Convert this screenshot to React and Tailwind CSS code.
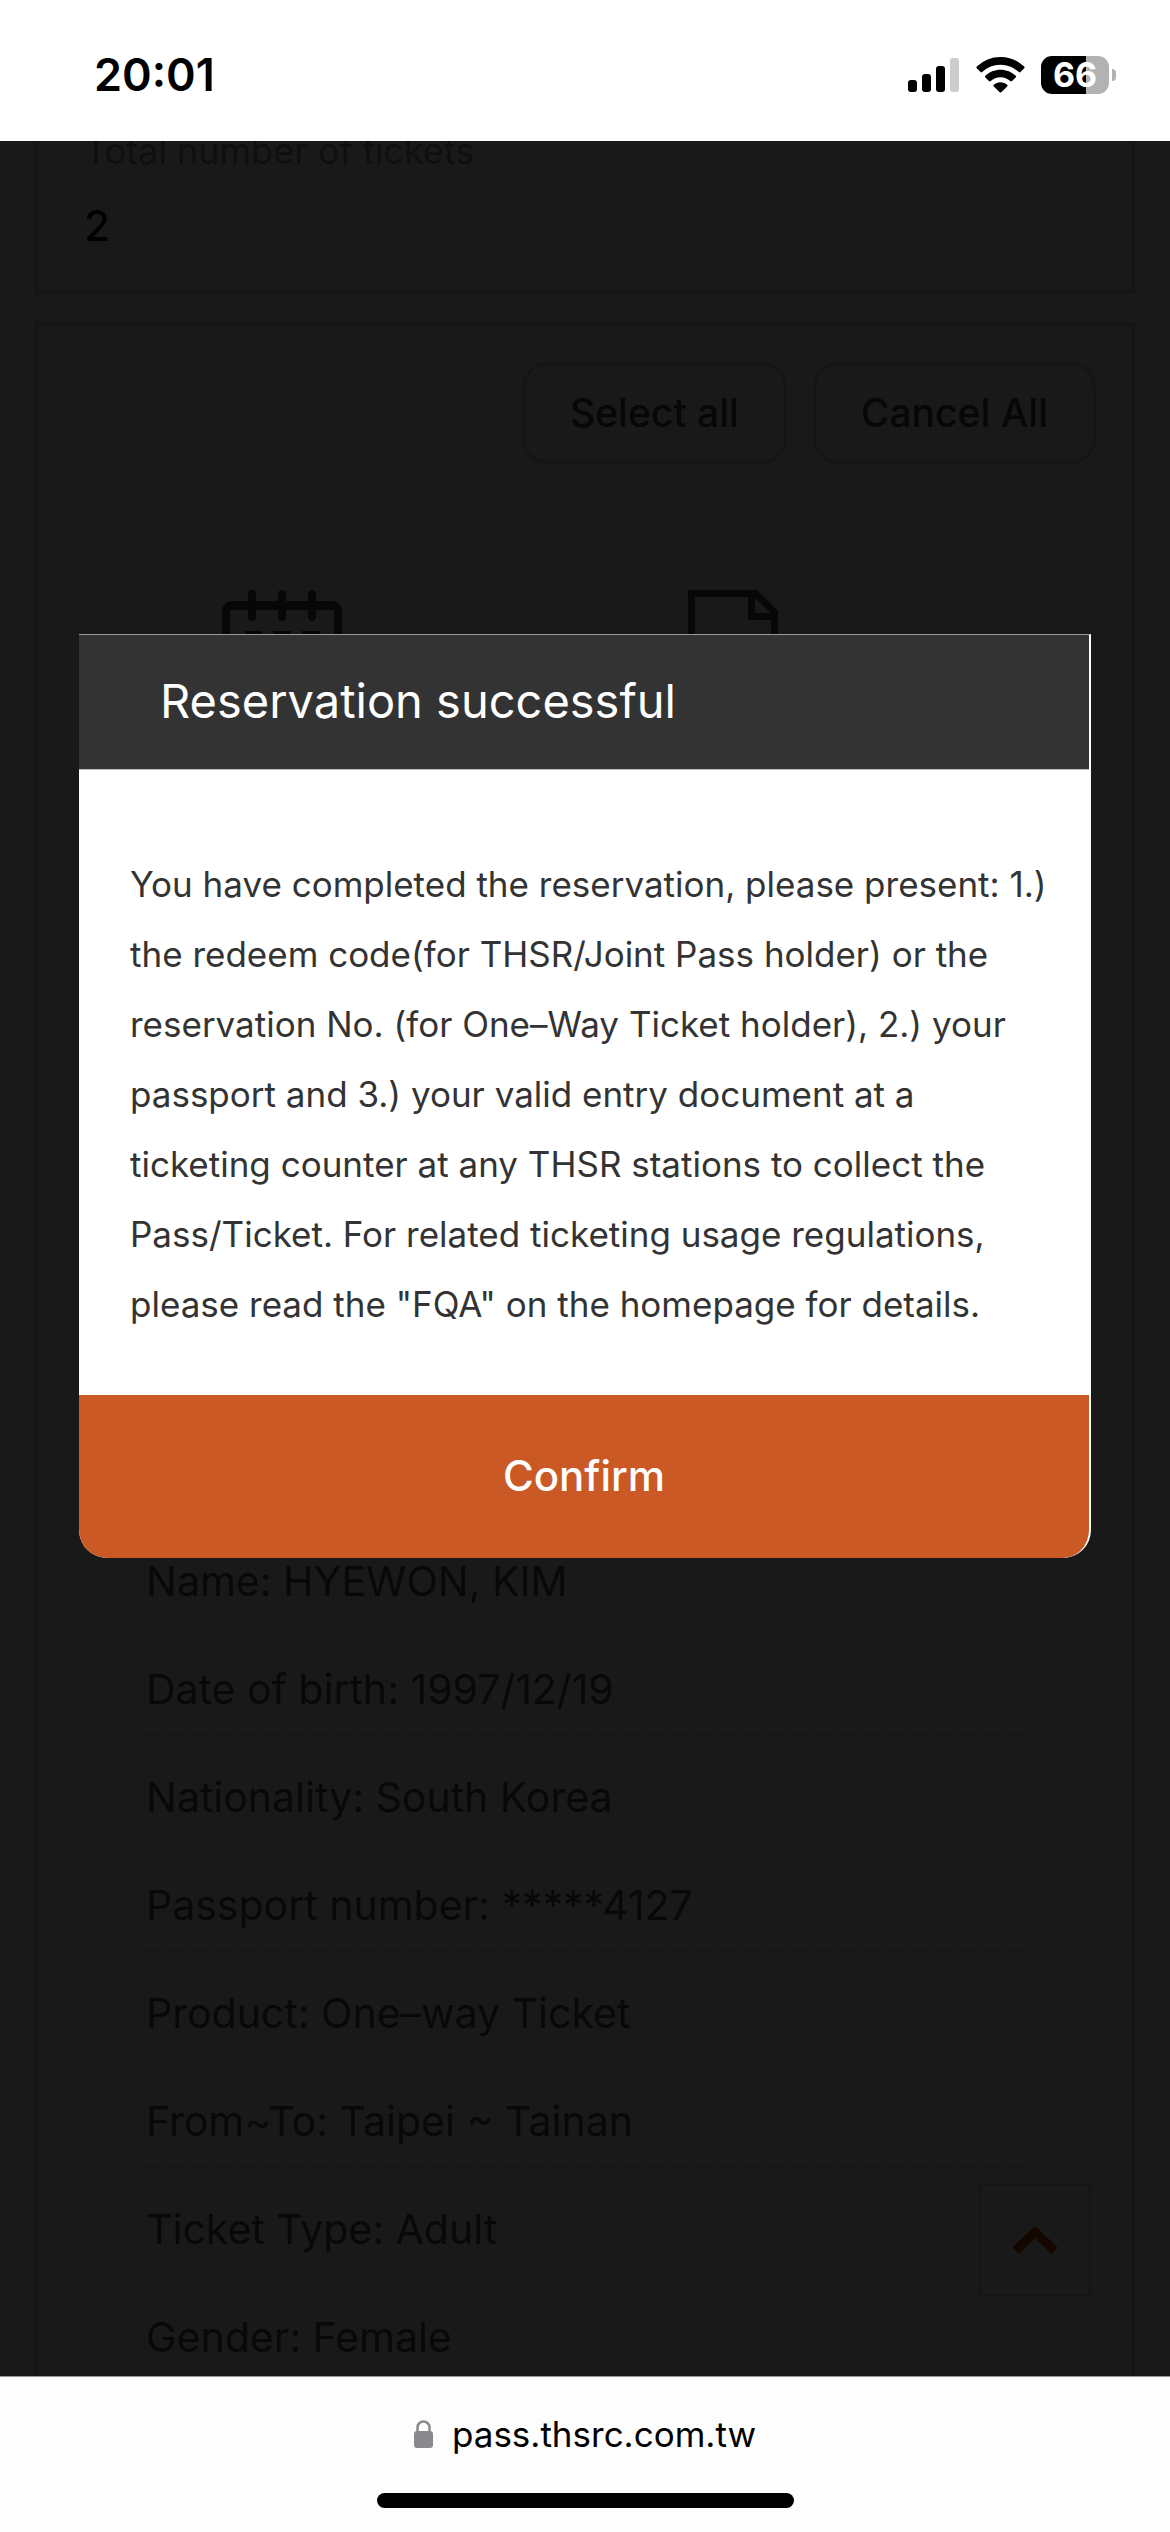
import React, { useState } from "react";

const details = [
  { label: "Name", value: "HYEWON, KIM" },
  { label: "Date of birth", value: "1997/12/19" },
  { label: "Nationality", value: "South Korea" },
  { label: "Passport number", value: "*****4127" },
  { label: "Product", value: "One–way Ticket" },
  { label: "From~To", value: "Taipei ~ Tainan" },
  { label: "Ticket Type", value: "Adult" },
  { label: "Gender", value: "Female" },
];

function StatusBar() {
  return (
    <header className="flex h-[141px] shrink-0 items-center justify-between bg-white pt-2 pr-[54px] pl-[94px]">
      <span className="text-[45px] leading-none font-semibold text-black">20:01</span>
      <div className="flex items-center gap-4">
        <svg width="52" height="36" viewBox="0 0 52 36" aria-label="Signal">
          <rect x="0" y="23" width="9" height="12" rx="3" />
          <rect x="14" y="17" width="9" height="18" rx="3" />
          <rect x="28" y="9" width="9" height="26" rx="3" />
          <rect x="42" y="1" width="9" height="34" rx="3" fill="#cccccc" />
        </svg>
        <svg width="49" height="36" viewBox="0 0 49 36" aria-label="Wi-Fi">
          <path d="M24.5 0C33.700 0 42 3.600 48.200 9.600c.5.500.5 1.200 0 1.700l-3.700 3.700c-.5.500-1.200.5-1.700 0A26.500 26.500 0 0 0 24.500 7.700 26.500 26.500 0 0 0 6.200 15c-.5.500-1.200.500-1.700 0L.8 11.300c-.5-.5-.5-1.200 0-1.700A34 34 0 0 1 24.500 0z" />
          <path d="M24.500 12.700c5.900 0 11.200 2.300 15.200 6 .5.500.5 1.200 0 1.700L36 24.100c-.5.500-1.200.5-1.700 0a14.300 14.300 0 0 0-19.600 0c-.5.500-1.200.500-1.700 0l-3.700-3.700c-.5-.5-.5-1.200 0-1.700 4-3.700 9.300-6 15.200-6z" />
          <path d="M24.500 25.200c2.600 0 4.900 1 6.700 2.500.5.500.5 1.200 0 1.700l-5.900 5.900c-.4.400-1.200.4-1.600 0l-5.900-5.900c-.5-.5-.5-1.200 0-1.700 1.800-1.500 4.100-2.500 6.700-2.500z" />
        </svg>
        <div className="flex items-center gap-[3px]">
          <div className="flex h-[38px] w-[68px] items-center justify-center rounded-[11px] bg-linear-to-r from-black from-66% to-[#b2b2b2] to-66%">
            <span className="text-[34px] leading-none font-bold text-white">66</span>
          </div>
          <div className="h-3 w-1 rounded-r-full bg-[#b2b2b2]" />
        </div>
      </div>
    </header>
  );
}

function CalendarIcon() {
  return (
    <svg width="120" height="120" viewBox="0 0 120 120" fill="none" stroke="#4a4a4a" strokeWidth="8">
      <rect x="4" y="15" width="112" height="101" rx="6" />
      <path d="M4 16h112" />
      <path d="M30 4v23M60 4v23M90 4v23" strokeLinecap="round" />
      <path d="M23 45h17M51 45h18M80 45h18M23 65h17M51 65h18M80 65h18M23 85h17M51 85h18M80 85h18" />
    </svg>
  );
}

function DocumentIcon() {
  return (
    <svg width="90" height="120" viewBox="0 0 90 120" fill="none" stroke="#4a4a4a" strokeWidth="7">
      <path d="M3.500 3.500h64L86.500 22v94h-83z" />
      <path d="M63.500 3.500v23H87" />
    </svg>
  );
}

function TicketPage() {
  return (
    <div className="flex flex-col gap-[30px] px-[35px]">
      <section className="flex flex-col border-3 border-t-0 border-[#d0d0d0] px-[46px] pb-[34px]">
        <h2 className="text-[36px] leading-[20px] font-normal text-[#999999]">Total number of tickets</h2>
        <p className="mt-[35px] text-[42px] leading-[60px] font-medium text-[#111111]">2</p>
      </section>

      <section className="flex flex-col border-3 border-[#d0d0d0] bg-[#f7f7f7]">
        <div className="flex justify-end gap-[26px] pt-9 pr-9">
          <button type="button" className="h-[102px] rounded-[26px] border-3 border-[#d0d0d0] bg-[#fafafa] px-[45px] text-[39px] font-medium text-[#4a4a4a]">
            Select all
          </button>
          <button type="button" className="h-[102px] rounded-[26px] border-3 border-[#d0d0d0] bg-[#fafafa] px-[45px] text-[39px] font-medium text-[#4a4a4a]">
            Cancel All
          </button>
        </div>
        <div className="mt-[51px] flex gap-[42px] px-[45px]">
          <div className="flex h-[400px] w-[397px] justify-center rounded-[26px] bg-white pt-[75px]">
            <CalendarIcon />
          </div>
          <div className="flex h-[400px] w-[450px] justify-center rounded-[26px] bg-white pt-[75px] pr-7">
            <DocumentIcon />
          </div>
        </div>
        <ul className="mx-[29px] mt-[605px] bg-white px-[79px]">
          {details.map((d) => (
            <li key={d.label} className="border-b-3 border-dotted border-[#d0d0d0] pt-5 pb-[3px] text-[41px] leading-[82px] text-[#555555]">
              {d.label}: {d.value}
            </li>
          ))}
        </ul>
      </section>
    </div>
  );
}

function SuccessDialog({ onConfirm }) {
  return (
    <div role="dialog" aria-modal="true" aria-labelledby="dialog-title" className="w-full overflow-hidden rounded-b-[28px] border-t border-r-2 border-t-[#999999] border-r-white bg-white">
      <h1 id="dialog-title" className="bg-[#333333] px-[81px] pb-[2px] text-[47px] leading-[132px] font-normal text-white">
        Reservation successful
      </h1>
      <p className="border-t border-[#bbbbbb] pt-[79px] pr-9 pb-14 pl-[51px] text-[35px] leading-[70px] text-[#333333]">
        You have completed the reservation, please present: 1.) the redeem code(for THSR/Joint Pass holder) or the
        reservation No. (for One–Way Ticket holder), 2.) your passport and 3.) your valid entry document at a
        ticketing counter at any THSR stations to collect the Pass/Ticket. For related ticketing usage regulations,
        please read the "FQA" on the homepage for details.
      </p>
      <button type="button" onClick={onConfirm} className="h-[163px] w-full bg-[#ca5926] pb-[2px] text-[42px] font-medium text-white">
        Confirm
      </button>
    </div>
  );
}

function AddressBar() {
  return (
    <footer className="flex shrink-0 flex-col items-center border-t border-[#999999] bg-[#fdfdfd] pb-6">
      <a href="#" className="flex items-center gap-[18px] pt-[30px] text-[35px] leading-[54px] text-black">
        <svg width="20" height="28" viewBox="0 0 20 28" fill="#8a8a8e" aria-hidden="true">
          <rect x="0" y="11" width="19" height="17" rx="3" />
          <path d="M3.500 12V7.500a6 6 0 0 1 12 0V12" fill="none" stroke="#8a8a8e" strokeWidth="2.500" />
        </svg>
        pass.thsrc.com.tw
      </a>
      <div className="mt-8 h-[15px] w-[417px] rounded-full bg-black" />
    </footer>
  );
}

export default function App() {
  const [open, setOpen] = useState(true);

  return (
    <div className="flex h-screen flex-col overflow-hidden bg-white font-['Inter','Noto_Sans',sans-serif]">
      <StatusBar />
      <main className="relative min-h-0 flex-1 overflow-hidden bg-white">
        <TicketPage />
        <button type="button" aria-label="Back to top" className="absolute right-[79px] bottom-20 flex size-28 items-center justify-center border-2 border-[#d0d0d0] bg-white">
          <svg width="46" height="27" viewBox="0 0 46 27" fill="none" stroke="#ca4a00" strokeWidth="9">
            <path d="M3.500 23.500L23 5l19.500 18.500" strokeLinejoin="round" />
          </svg>
        </button>
        {open && <div className="absolute inset-0 bg-black/90" />}
        {open && (
          <div className="absolute inset-x-0 top-[493px] px-[79px]">
            <SuccessDialog onConfirm={() => setOpen(false)} />
          </div>
        )}
      </main>
      <AddressBar />
    </div>
  );
}
